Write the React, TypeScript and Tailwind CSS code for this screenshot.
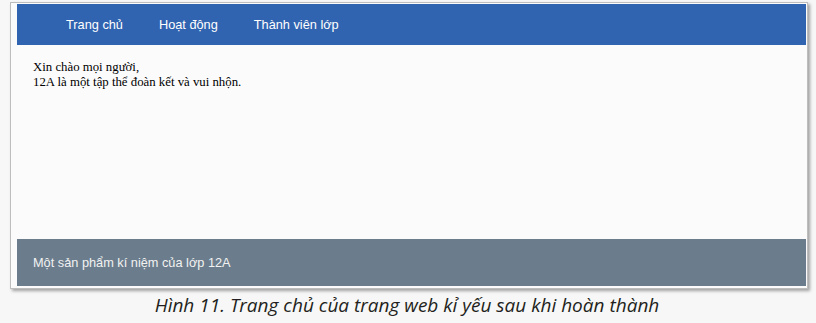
import React from 'react';

const navItems = ['Trang chủ', 'Hoạt động', 'Thành viên lớp'];

const App: React.FC = () => {
  return (
    <div className="w-[816px] h-[323px] bg-[#f7f7f7] overflow-hidden relative">
      {/* Frame */}
      <div className="ml-[10px] mt-[2px] w-[798px] h-[287px] border border-[#bdbdbd] bg-[#fbfbfb] pl-[6px] pr-[1px] pt-[1px] pb-[2px] flex flex-col shadow-[2px_2px_3px_rgba(0,0,0,0.35)]">
        {/* Header */}
        <nav className="h-[41px] bg-[#3164b0] flex items-center pl-[49px] gap-[36px] font-['Liberation_Sans',Arial,sans-serif] text-[12.75px] text-white">
          {navItems.map((item) => (
            <span key={item}>{item}</span>
          ))}
        </nav>

        {/* Content */}
        <main className="flex-1 pl-[16px] pt-[15px] font-['Liberation_Serif','Times_New_Roman',serif] text-[12.8px] leading-[15px] text-black">
          <p>Xin chào mọi người,</p>
          <p>12A là một tập thể đoàn kết và vui nhộn.</p>
        </main>

        {/* Footer */}
        <footer className="h-[47px] bg-[#6b7d8c] flex items-center pl-[16px] font-['Liberation_Sans',Arial,sans-serif] text-[12.75px] text-[#f2f2f2]">
          Một sản phẩm kí niệm của lớp 12A
        </footer>
      </div>

      {/* Caption */}
      <p className="mt-[3px] text-center font-['Open_Sans',sans-serif] italic text-[19px] leading-[26px] text-[#231f20] pr-[2px]">
        Hình 11. Trang chủ của trang web kỉ yếu sau khi hoàn thành
      </p>
    </div>
  );
};

export default App;
